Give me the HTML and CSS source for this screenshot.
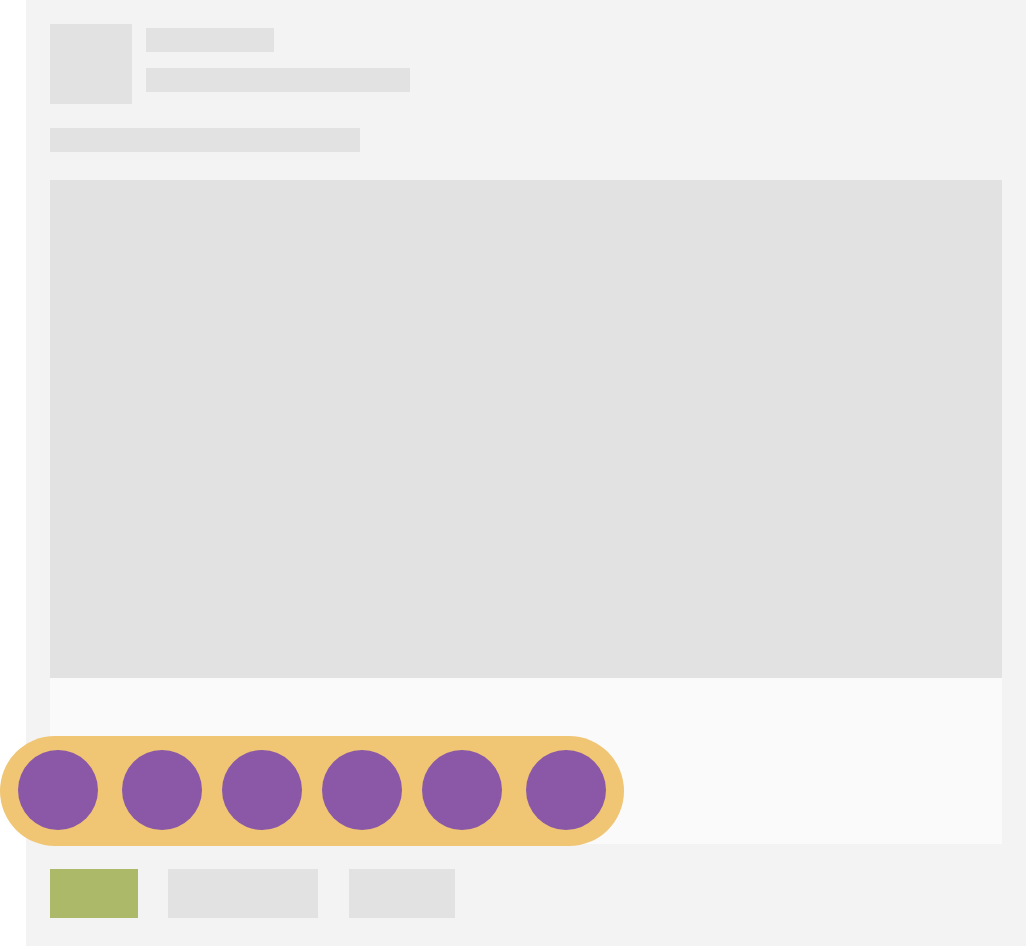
FILE: index.html
```html
<!DOCTYPE html>
<html lang="en">
<head>
<meta charset="utf-8">
<title>Skeleton card</title>
<link rel="stylesheet" href="styles.css">
</head>
<body>
<div class="card">
  <div class="header">
    <div class="avatar"></div>
    <div class="lines">
      <div class="bar bar-short"></div>
      <div class="bar bar-medium"></div>
    </div>
  </div>
  <div class="bar bar-title"></div>
  <div class="media"></div>
  <div class="panel">
    <div class="pill">
      <span class="dot dot-first"></span>
      <span class="dot"></span>
      <span class="dot"></span>
      <span class="dot"></span>
      <span class="dot"></span>
      <span class="dot dot-last"></span>
    </div>
  </div>
  <div class="actions">
    <div class="btn btn-primary"></div>
    <div class="btn btn-wide"></div>
    <div class="btn btn-mid"></div>
  </div>
</div>
</body>
</html>
```

FILE: styles.css
```css
html, body {
  margin: 0;
  padding: 0;
  background: #ffffff;
  font-family: "Liberation Sans", Arial, sans-serif;
}

.card {
  margin-left: 26px;
  width: 1000px;
  height: 946px;
  box-sizing: border-box;
  padding: 24px 24px 0 24px;
  background: #f3f3f3;
}

.header {
  display: flex;
  gap: 14px;
}

.avatar {
  width: 82px;
  height: 80px;
  background: #e2e2e2;
}

.lines {
  display: flex;
  flex-direction: column;
  gap: 16px;
  padding-top: 4px;
}

.bar {
  height: 24px;
  background: #e2e2e2;
}

.bar-short { width: 128px; }
.bar-medium { width: 264px; }
.bar-title { width: 310px; margin-top: 24px; }

.media {
  margin-top: 28px;
  height: 498px;
  background: #e2e2e2;
}

.panel {
  position: relative;
  height: 166px;
  background: #fafafa;
}

.pill {
  position: absolute;
  left: -50px;
  top: 58px;
  width: 624px;
  height: 110px;
  box-sizing: border-box;
  padding: 0 18px;
  border-radius: 55px;
  background: #f0c574;
  display: flex;
  align-items: center;
  gap: 20px;
}

.dot {
  width: 80px;
  height: 80px;
  flex: none;
  border-radius: 50%;
  background: #8a58a6;
  margin-top: -2px;
}

.dot-first { margin-right: 4px; }
.dot-last { margin-left: 4px; }

.actions {
  display: flex;
  margin-top: 25px;
}

.btn {
  height: 49px;
  background: #e2e2e2;
}

.btn-primary { width: 88px; background: #acb968; }
.btn-wide { width: 150px; margin-left: 30px; }
.btn-mid { width: 106px; margin-left: 31px; }
```
